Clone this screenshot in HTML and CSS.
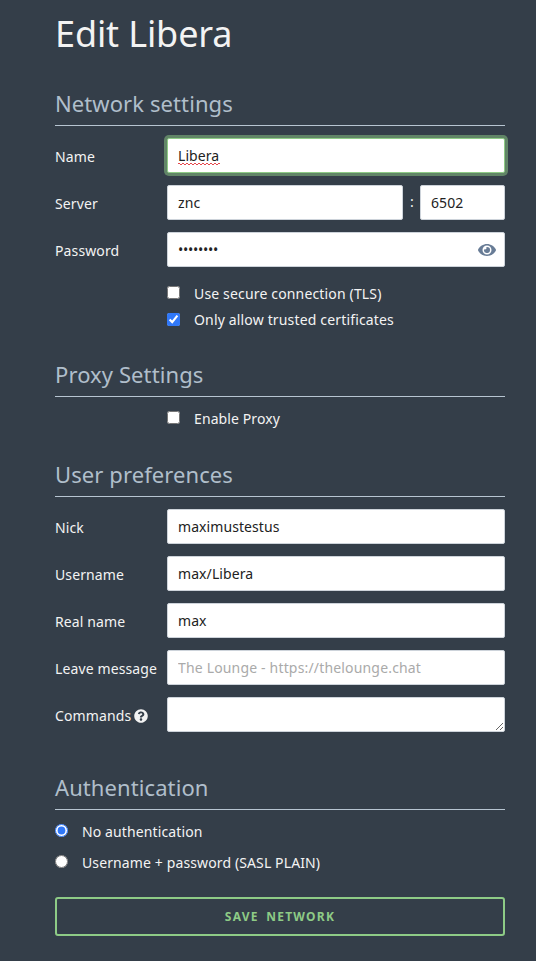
FILE: index.html
```html
<!DOCTYPE html>
<html lang="en">
<head>
<meta charset="utf-8">
<title>Edit Libera</title>
<link rel="stylesheet" href="styles.css">
</head>
<body>
<form class="network">
  <h1>Edit Libera</h1>

  <h2>Network settings</h2>
  <div class="row">
    <label for="name">Name</label>
    <div class="control">
      <input id="name" class="input focused" value="Libera" spellcheck="false">
      <svg class="squiggle" width="42" height="3" viewBox="0 0 42 3"><path d="M0 2 q1 -2 2 0 t2 0 t2 0 t2 0 t2 0 t2 0 t2 0 t2 0 t2 0 t2 0 t2 0 t2 0 t2 0 t2 0 t2 0 t2 0 t2 0 t2 0 t2 0 t2 0 t2 0"/></svg>
    </div>
  </div>
  <div class="row">
    <label for="host">Server</label>
    <div class="control server">
      <input id="host" class="input" value="znc">
      <span class="colon">:</span>
      <input class="input port" value="6502" aria-label="Port">
    </div>
  </div>
  <div class="row">
    <label for="password">Password</label>
    <div class="control">
      <input id="password" class="input" type="password" value="password">
      <svg class="eye" viewBox="0 0 576 512"><path d="M572.52 241.4C518.29 135.59 410.93 64 288 64S57.68 135.64 3.48 241.41a32.35 32.35 0 0 0 0 29.19C57.71 376.41 165.07 448 288 448s230.32-71.64 284.52-177.41a32.35 32.35 0 0 0 0-29.19zM288 400a144 144 0 1 1 144-144 143.93 143.93 0 0 1-144 144zm0-240a95.31 95.31 0 0 0-25.31 3.79 47.85 47.85 0 0 1-66.9 66.9A95.78 95.78 0 1 0 288 160z"/></svg>
    </div>
  </div>
  <div class="checks">
    <label class="check"><input type="checkbox"><span>Use secure connection (TLS)</span></label>
    <label class="check trusted"><input type="checkbox" checked><span>Only allow trusted certificates</span></label>
  </div>

  <h2>Proxy Settings</h2>
  <div class="checks proxy">
    <label class="check"><input type="checkbox"><span>Enable Proxy</span></label>
  </div>

  <h2>User preferences</h2>
  <div class="row">
    <label for="nick">Nick</label>
    <div class="control"><input id="nick" class="input" value="maximustestus"></div>
  </div>
  <div class="row">
    <label for="username">Username</label>
    <div class="control"><input id="username" class="input" value="max/Libera"></div>
  </div>
  <div class="row">
    <label for="realname">Real name</label>
    <div class="control"><input id="realname" class="input" value="max"></div>
  </div>
  <div class="row">
    <label for="leave">Leave message</label>
    <div class="control"><input id="leave" class="input" placeholder="The Lounge - https://thelounge.chat"></div>
  </div>
  <div class="row">
    <label for="commands">Commands
      <svg class="help" viewBox="0 0 512 512"><path d="M504 256c0 136.997-111.043 248-248 248S8 392.997 8 256C8 119.083 119.043 8 256 8s248 111.083 248 248zM262.655 90c-54.497 0-89.255 22.957-116.549 63.758-3.536 5.286-2.353 12.415 2.715 16.258l34.699 26.31c5.205 3.947 12.621 3.008 16.665-2.122 17.864-22.658 30.113-35.797 57.303-35.797 20.429 0 45.698 13.148 45.698 32.958 0 14.976-12.363 22.667-32.534 33.976C247.128 238.528 216 254.941 216 296v4c0 6.627 5.373 12 12 12h56c6.627 0 12-5.373 12-12v-1.333c0-28.462 83.186-29.647 83.186-106.667 0-58.002-60.165-102-116.531-102zM256 338c-25.365 0-46 20.635-46 46 0 25.364 20.635 46 46 46s46-20.636 46-46c0-25.365-20.635-46-46-46z"/></svg>
    </label>
    <div class="control"><textarea id="commands" class="input"></textarea></div>
  </div>

  <h2 class="auth-title">Authentication</h2>
  <div class="auth">
    <label class="check"><input type="radio" name="auth" checked><span>No authentication</span></label>
    <label class="check"><input type="radio" name="auth"><span>Username + password (SASL PLAIN)</span></label>
  </div>

  <button class="save" type="button">Save network</button>
</form>
</body>
</html>
```
FILE: styles.css
```css
* { box-sizing: border-box; }

body {
  margin: 0;
  background: #343e49;
  color: #f3f3f3;
  font: 14px/20px "Noto Sans", sans-serif;
  letter-spacing: .12px;
}

.network {
  width: 450px;
  margin-left: 55px;
}

h1 {
  margin: 0 0 35px;
  padding-top: 9px;
  font-size: 36px;
  font-weight: 400;
  letter-spacing: -.12px;
  line-height: 50px;
}

h2 {
  height: 32px;
  margin: 0 0 12px;
  border-bottom: 1px solid #b7c5d1;
  color: #b0becb;
  font-size: 22px;
  font-weight: 400;
  letter-spacing: .09px;
  line-height: 18px;
}

.row {
  display: flex;
  height: 35px;
  margin-bottom: 12px;
}

.row > label {
  width: 112px;
  padding-top: 9px;
  white-space: nowrap;
}

.control {
  position: relative;
  flex: 1;
}

.input {
  display: block;
  width: 100%;
  height: 35px;
  margin: 0;
  padding: 0 10px 1px;
  border: 1px solid #cdd3da;
  border-radius: 2px;
  outline: 0;
  background: #fff;
  color: #222;
  font: inherit;
  letter-spacing: .08px;
}

.input[type="password"] { letter-spacing: -.25px; }

.input::placeholder {
  color: #aaa;
  letter-spacing: .17px;
}

textarea.input {
  padding-top: 6px;
  resize: vertical;
}

.focused {
  border-color: #8ecb86;
  box-shadow: 0 0 0 3px rgba(142, 203, 134, .5);
}

.squiggle {
  position: absolute;
  top: 24px;
  left: 11px;
  fill: none;
  stroke: #e5484d;
}

.server { display: flex; }

.colon {
  flex: none;
  width: 17px;
  padding: 7px 0 0 1px;
  text-align: center;
}

.port {
  flex: none;
  width: 85px;
}

.eye {
  position: absolute;
  top: 10px;
  right: 9px;
  width: 18px;
  height: 16px;
  fill: #687c96;
}

.help {
  width: 14px;
  height: 14px;
  margin-left: -1px;
  fill: currentColor;
  vertical-align: -2px;
}

.checks {
  height: 86px;
  padding: 4px 0 0 112px;
  letter-spacing: .16px;
}

.checks.proxy { height: 56px; padding-top: 0; }

.check {
  display: flex;
  height: 26px;
}

.check input {
  width: 13px;
  height: 13px;
  margin: 3px 14px 0 0;
  accent-color: #3078f8;
}

.check span { line-height: 21px; }

.check.trusted input { margin-top: 4px; }

.checks.proxy { letter-spacing: .1px; }
.checks.proxy input { margin-top: 2px; }
.checks.proxy span { line-height: 19px; }

h2.auth-title {
  margin-top: 46px;
  margin-bottom: 11px;
}

.auth .check { height: 31px; }

.save {
  display: block;
  width: 100%;
  height: 39px;
  margin-top: 14px;
  padding: 0;
  border: 2px solid #8ecb86;
  border-radius: 3px;
  background: none;
  color: #8ecb86;
  font: 700 12px/18px "Noto Sans", sans-serif;
  letter-spacing: 1.25px;
  word-spacing: 3px;
  text-transform: uppercase;
}
```
